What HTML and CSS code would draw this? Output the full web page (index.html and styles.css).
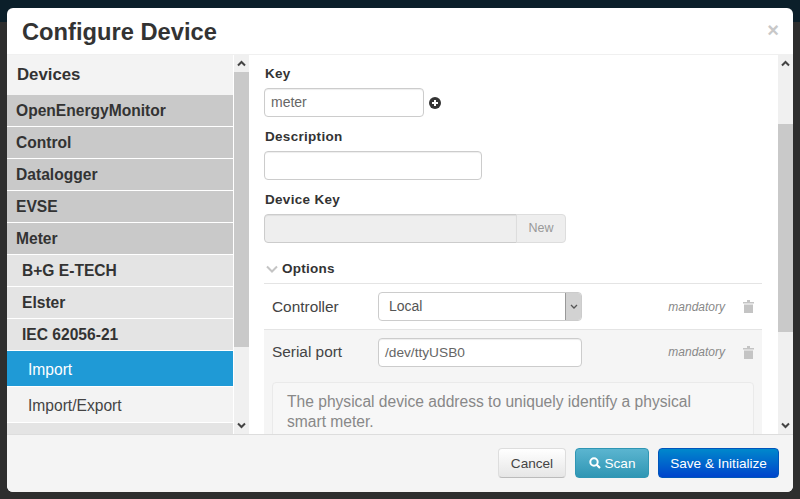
FILE: index.html
```html
<!DOCTYPE html>
<html lang="en">
<head>
<meta charset="utf-8">
<title>Configure Device</title>
<link rel="stylesheet" href="styles.css">
</head>
<body>
<div class="modal">
  <header class="modal-header">
    <h3>Configure Device</h3>
    <span class="close">×</span>
  </header>
  <div class="modal-body">
    <nav class="sidebar">
      <div class="side-title">Devices</div>
      <div class="group">OpenEnergyMonitor</div>
      <div class="group">Control</div>
      <div class="group">Datalogger</div>
      <div class="group">EVSE</div>
      <div class="group">Meter</div>
      <div class="sub">B+G E-TECH</div>
      <div class="sub">Elster</div>
      <div class="sub">IEC 62056-21</div>
      <div class="leaf active">Import</div>
      <div class="leaf">Import/Export</div>
      <div class="sub tail"></div>
    </nav>
    <div class="scrollbar">
      <svg class="arrow" width="15" height="17" viewBox="0 0 15 17"><path d="M4 10.5l3.5-3.5 3.5 3.5" fill="none" stroke="#444" stroke-width="2"/></svg>
      <div class="track"><div class="thumb thumb-side"></div></div>
      <svg class="arrow" width="15" height="17" viewBox="0 0 15 17"><path d="M4 6.5l3.5 3.5 3.5-3.5" fill="none" stroke="#444" stroke-width="2"/></svg>
    </div>
    <main class="content">
      <label class="field-label first">Key</label>
      <div class="key-row">
        <div class="input key">meter</div>
        <svg class="plus" width="12" height="12" viewBox="0 0 12 12"><circle cx="6" cy="6" r="6" fill="#333"/><path d="M6 3v6M3 6h6" stroke="#fff" stroke-width="2"/></svg>
      </div>
      <label class="field-label">Description</label>
      <div class="input desc"></div>
      <label class="field-label">Device Key</label>
      <div class="append">
        <div class="input disabled"></div>
        <div class="addon">New</div>
      </div>
      <div class="options-title">
        <svg width="12" height="8" viewBox="0 0 12 8"><path d="M1 1.5l5 5 5-5" fill="none" stroke="#c4c4c4" stroke-width="2"/></svg>
        <span>Options</span>
      </div>
      <div class="option controller">
        <span class="opt-name">Controller</span>
        <div class="select"><span class="select-value">Local</span><span class="select-btn"><svg width="8" height="6" viewBox="0 0 8 6"><path d="M1 1l3 3 3-3" fill="none" stroke="#555" stroke-width="1.3"/></svg></span></div>
        <em class="mandatory">mandatory</em>
        <svg class="trash" width="11" height="13" viewBox="0 0 11 13"><path d="M0 2h11v1.500H0zM4 0h3v2H4zM1 4.500h9V13H1z" fill="#c4c4c4"/></svg>
      </div>
      <div class="option-panel">
        <div class="option serial">
          <span class="opt-name">Serial port</span>
          <div class="input serial-input">/dev/ttyUSB0</div>
          <em class="mandatory">mandatory</em>
          <svg class="trash" width="11" height="13" viewBox="0 0 11 13"><path d="M0 2h11v1.500H0zM4 0h3v2H4zM1 4.500h9V13H1z" fill="#c4c4c4"/></svg>
        </div>
        <div class="help">The physical device address to uniquely identify a physical smart meter.</div>
      </div>
    </main>
    <div class="scrollbar">
      <svg class="arrow" width="15" height="17" viewBox="0 0 15 17"><path d="M4 10.500l3.500-3.500 3.500 3.500" fill="none" stroke="#444" stroke-width="2"/></svg>
      <div class="track"><div class="thumb thumb-main"></div></div>
      <svg class="arrow" width="15" height="17" viewBox="0 0 15 17"><path d="M4 6.500l3.500 3.500 3.500-3.500" fill="none" stroke="#444" stroke-width="2"/></svg>
    </div>
  </div>
  <footer class="modal-footer">
    <button class="btn btn-default">Cancel</button>
    <button class="btn btn-info"><svg width="12" height="12" viewBox="0 0 12 12"><circle cx="5" cy="5" r="3.700" fill="none" stroke="#fff" stroke-width="2"/><path d="M7.700 7.700L11 11" stroke="#fff" stroke-width="2.200"/></svg>Scan</button>
    <button class="btn btn-primary">Save &amp; Initialize</button>
  </footer>
</div>
</body>
</html>
```
FILE: styles.css
```css
* { box-sizing: border-box; }
html, body { margin: 0; height: 100%; }
body {
  width: 800px;
  height: 499px;
  overflow: hidden;
  padding: 8px 7px 7px;
  background: linear-gradient(#0b1f2a 0, #0b1f2a 22px, #2e2e2e 22px, #2e2e2e 100%);
  font-family: "Liberation Sans", Arial, sans-serif;
  color: #333;
}
.modal {
  width: 786px;
  height: 484px;
  display: flex;
  flex-direction: column;
  background: #fff;
  border-radius: 6px;
  overflow: hidden;
}
.modal-header {
  height: 47px;
  flex: none;
  display: flex;
  align-items: center;
  justify-content: space-between;
  padding: 0 15px;
  border-bottom: 1px solid #f0f0f0;
}
.modal-header h3 {
  margin: 2px 0 0;
  font-size: 23.700px;
  font-weight: bold;
  line-height: 46px;
  color: #333;
}
.close {
  font-size: 20px;
  font-weight: bold;
  line-height: 20px;
  color: #c8c8c8;
  margin-top: -3px;
  margin-right: -1px;
}
.modal-body {
  flex: 1;
  min-height: 0;
  display: flex;
}
.sidebar {
  width: 226px;
  flex: none;
  overflow: hidden;
  font-size: 15.600px;
  line-height: 20px;
  background: #fff;
}
.side-title {
  height: 40px;
  padding: 10px 10px 0;
  background: #f3f3f3;
  font-size: 16.800px;
  font-weight: bold;
}
.group, .sub {
  height: 31px;
  margin-bottom: 1px;
  padding: 6px 10px 0 9px;
  font-weight: bold;
  background: #c9c9c9;
  color: #333;
}
.sub {
  padding-left: 15px;
  background: #e4e4e4;
}
.leaf {
  height: 35px;
  margin-bottom: 1px;
  padding: 9px 10px 0 21px;
  background: #f3f3f3;
  color: #444;
}
.leaf.active {
  background: #1f9ad6;
  color: #fff;
}
.tail { height: 20px; }
.scrollbar {
  width: 15px;
  margin-left: 1px;
  flex: none;
  display: flex;
  flex-direction: column;
  background: #f0f0f0;
}
.content + .scrollbar { margin-left: 0; }
.arrow { flex: none; display: block; }
.track { flex: 1; min-height: 0; }
.thumb { background: #c9c9c9; }
.thumb-side { height: 275px; }
.thumb-main { height: 208px; margin-top: 52px; }
.content {
  flex: 1;
  min-width: 0;
  overflow: hidden;
  padding: 0 16px 0 15px;
  font-size: 14px;
}
.field-label {
  display: block;
  padding-left: 1px;
  font-weight: bold;
  font-size: 13.500px;
  line-height: 18px;
  margin-top: 11px;
  margin-bottom: 5px;
  letter-spacing: 0.300px;
}
.field-label.first { margin-top: 10px; }
.input {
  height: 29px;
  padding: 0 6px;
  background: #fff;
  border: 1px solid #ccc;
  border-radius: 4px;
  box-shadow: inset 0 1px 1px rgba(0,0,0,.07);
  font-size: 14px;
  line-height: 27px;
  color: #666;
}
.key-row { display: flex; align-items: center; gap: 5px; }
.key { width: 160px; }
.plus { margin-top: 1px; }
.desc { width: 218px; }
.append { display: flex; width: 302px; }
.disabled {
  flex: 1;
  background: #eee;
  border-radius: 4px 0 0 4px;
}
.addon {
  width: 50px;
  height: 29px;
  margin-left: -1px;
  border: 1px solid #ddd;
  border-radius: 0 4px 4px 0;
  background: #eee;
  color: #999;
  font-size: 12.500px;
  line-height: 27px;
  text-align: center;
}
.options-title {
  display: flex;
  align-items: center;
  gap: 4px;
  height: 41px;
  padding: 11px 0 0 2px;
  border-bottom: 1px solid #e4e4e4;
  font-size: 13.500px;
  font-weight: bold;
  letter-spacing: 0.250px;
}
.option {
  display: flex;
  align-items: center;
  height: 46px;
  padding: 0 8px;
}
.controller { border-bottom: 1px solid #e4e4e4; }
.opt-name { width: 106px; flex: none; font-size: 15.400px; color: #444; }
.select {
  width: 204px;
  height: 29px;
  flex: none;
  display: flex;
  border: 1px solid #ccc;
  border-radius: 4px;
  overflow: hidden;
  background: #fff;
  font-size: 14px;
  color: #555;
}
.select-value { flex: 1; padding-left: 10px; line-height: 27px; }
.select-btn {
  width: 16px;
  background: #d2d2d2;
  border-left: 1px solid #999;
  display: flex;
  align-items: center;
  justify-content: center;
}
.mandatory {
  margin-left: auto;
  font-size: 12px;
  color: #888;
}
.trash { margin-left: 18px; flex: none; }
.option-panel {
  background: #f5f5f5;
  height: 115px;
  overflow: hidden;
}
.serial { height: 44px; }
.serial-input {
  width: 204px;
  flex: none;
  font-size: 13.700px;
}
.help {
  margin: 8px 8px 0;
  height: 70px;
  padding: 9px 50px 8px 14px;
  background: #f7f7f7;
  border: 1px solid #eaeaea;
  border-radius: 4px;
  font-size: 15.600px;
  line-height: 20px;
  color: #888;
}
.modal-footer {
  height: 58px;
  flex: none;
  display: flex;
  align-items: center;
  justify-content: flex-end;
  gap: 9px;
  padding: 0 14px 1px 0;
  background: #f4f4f4;
  border-top: 1px solid #ddd;
}
.btn {
  height: 30px;
  padding: 0;
  border-radius: 4px;
  font: 13.600px "Liberation Sans", Arial, sans-serif;
  white-space: nowrap;
  display: flex;
  align-items: center;
  gap: 4px;
  border: 1px solid transparent;
}
.btn-default {
  width: 68px;
  justify-content: center;
  color: #444;
  background: linear-gradient(#fff, #e6e6e6);
  border-color: #ddd #ddd #bbb;
}
.btn-info {
  width: 74px;
  justify-content: center;
  color: #fff;
  background: linear-gradient(#5bb5d0, #2f96b4);
  border-color: #2f96b4;
}
.btn-primary {
  width: 121px;
  justify-content: center;
  color: #fff;
  background: linear-gradient(#0088cc, #0044cc);
  border-color: #0055bb;
}
```
